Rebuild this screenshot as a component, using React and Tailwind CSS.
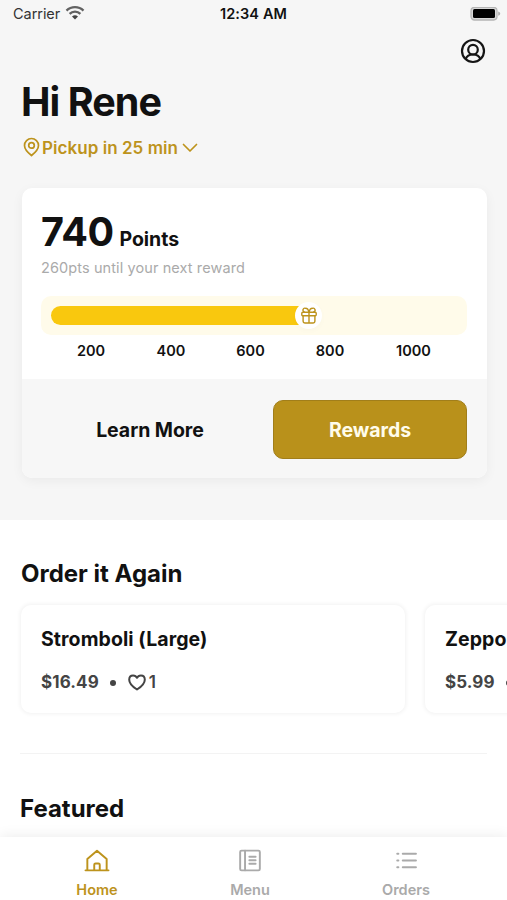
const marks = [
  { label: "200", width: "w-[80px]" },
  { label: "400", width: "w-[80px]" },
  { label: "600", width: "w-[79px]" },
  { label: "800", width: "w-[80px]" },
  { label: "1000", width: "w-[87px]" },
];

function WifiIcon() {
  return (
    <svg width="20" height="16" viewBox="0 0 20 16" fill="none" stroke="#626262" strokeWidth="2.3">
      <path d="M1.500 4.600a12.200 12.200 0 0 1 17 0" />
      <path d="M4.600 7.900a7.700 7.700 0 0 1 10.800 0" />
      <path d="M7 10.600a4.300 4.300 0 0 1 6 0L10 13.600z" fill="#444" stroke="none" />
    </svg>
  );
}

function BatteryIcon() {
  return (
    <svg width="31" height="15" viewBox="0 0 31 15" fill="none">
      <rect x="1" y=".4" width="26" height="12.600" rx="3.400" fill="#d8d8d8" stroke="#b5b5b5" strokeWidth="1.300" />
      <rect x="3" y="2.100" width="22" height="8.800" rx="1.500" fill="#000" />
      <path d="M28.200 4.600q2 .6 2 2.100t-2 2.100z" fill="#adadad" />
    </svg>
  );
}

function ProfileIcon() {
  return (
    <svg width="26" height="26" viewBox="0 0 26 26" fill="none" stroke="#151515" strokeWidth="2.2">
      <circle cx="13" cy="13" r="11" />
      <circle cx="13" cy="11.700" r="4.800" />
      <path d="M5.600 21.200c1-2.800 3.700-4.700 7.400-4.700s6.400 1.900 7.400 4.700" />
    </svg>
  );
}

function PinIcon() {
  return (
    <svg width="17" height="20" viewBox="0 0 17 20" fill="none" stroke="#bd931c" strokeWidth="1.700" strokeLinejoin="round">
      <path d="M8.500 18.500C6.400 16.800 1.500 12.800 1.500 8.400a7 6.900 0 0 1 14 0c0 4.400-4.900 8.400-7 10.100z" />
      <circle cx="8.500" cy="8.400" r="2.800" />
    </svg>
  );
}

function GiftIcon() {
  return (
    <svg width="16" height="17" viewBox="0 0 16 17" fill="none" stroke="#bd931c" strokeWidth="1.400" strokeLinejoin="round" strokeLinecap="round">
      <rect x=".8" y="5.300" width="14.400" height="3.400" rx="1" />
      <path d="M2.100 8.800v5.500a1.700 1.700 0 0 0 1.700 1.700h8.400a1.700 1.700 0 0 0 1.700-1.700V8.800M8 5.300V16M7.800 5.100C7.400 2.500 6 1.300 4.500 1.300a1.900 1.900 0 0 0-1.300 3.600M8.200 5.100C8.600 2.500 10 1.300 11.500 1.300a1.900 1.900 0 0 1 1.300 3.600" />
    </svg>
  );
}

function HeartIcon() {
  return (
    <svg width="18" height="17" viewBox="0 0 18 17" fill="none" stroke="#444" strokeWidth="2" strokeLinejoin="round">
      <path d="M9 15.500C6.500 13.900 1.200 10.200 1.200 5.700c0-2.600 1.700-4.300 3.900-4.300 1.600 0 3.200.9 3.900 2.400.7-1.500 2.300-2.400 3.900-2.400 2.200 0 3.900 1.700 3.900 4.300 0 4.500-5.300 8.200-7.800 9.800z" />
    </svg>
  );
}

function HomeIcon() {
  return (
    <svg width="28" height="25" viewBox="0 0 28 25" fill="none" stroke="#bd931c" strokeWidth="2.1" strokeLinecap="round" strokeLinejoin="round">
      <path d="M1.500 23.200h25M3.500 23.200V10.800L14 1.800l10.500 9v12.400M11 23.200v-6a1.500 1.500 0 0 1 1.500-1.500h3a1.500 1.500 0 0 1 1.500 1.500v6" />
    </svg>
  );
}

function MenuIcon() {
  return (
    <svg width="24" height="25" viewBox="0 0 24 25" fill="none" stroke="#aaa" strokeWidth="2.1" strokeLinecap="round">
      <rect x="1.300" y="1.800" width="21.400" height="21.400" rx="1.500" />
      <path d="M6.600 2v21M11.300 8.400h6.800M11.300 12.200h6.800M11.300 16h6.800" />
    </svg>
  );
}

function OrdersIcon() {
  return (
    <svg width="24" height="25" viewBox="0 0 24 25" fill="none" stroke="#aaa" strokeWidth="2.200" strokeLinecap="round">
      <path d="M8.500 5.200H22.800M8.500 12.500H22.800M8.500 19.800H22.800M2.500 5.200h1.200M2.500 12.500h1.200M2.500 19.800h1.200" />
    </svg>
  );
}

function ItemCard({ name, price, likes }) {
  return (
    <article className="h-[108px] w-[384px] shrink-0 rounded-[10px] bg-white pl-5 pt-[22px] shadow-[0_0_4px_1px_rgba(0,0,0,0.055)]">
      <h3 className="text-[19.5px] leading-6 font-bold tracking-[0.08px] whitespace-nowrap">{name}</h3>
      <div className="mt-[19px] flex h-6 items-center text-[17px] leading-6 font-bold text-[#444]">
        <span className="tracking-[0.1px]">{price}</span>
        <span className="ml-[11px] mt-0.5 size-[6px] rounded-full bg-[#444]" />
        <span className="ml-[12px]"><HeartIcon /></span>
        <span className="ml-[3px] font-semibold">{likes}</span>
      </div>
    </article>
  );
}

function Tab({ icon, label, tone }) {
  return (
    <div className={`flex w-[80px] flex-col items-center ${tone}`}>
      {icon}
      <span className="mt-[8px] text-[14.5px] leading-5 font-semibold">{label}</span>
    </div>
  );
}

export default function App() {
  return (
    <div className="flex h-[900px] w-[507px] flex-col overflow-hidden bg-white font-['Inter',sans-serif] text-[#111]">
      <header className="h-[520px] shrink-0 bg-[#f6f6f6]">
        <div className="grid h-7 grid-cols-3 items-center pl-[13px] pr-[6px]">
          <div className="flex items-center gap-[5px] text-[14.5px] leading-5 text-[#333]">
            <span className="tracking-[-0.05px]">Carrier</span>
            <WifiIcon />
          </div>
          <span className="-ml-[7px] text-center text-[14.5px] leading-5 font-semibold tracking-[0.1px] whitespace-nowrap">12:34 AM</span>
          <div className="flex justify-end"><BatteryIcon /></div>
        </div>
        <div className="mt-[10px] flex justify-end pr-[21px]"><ProfileIcon /></div>
        <h1 className="mt-[14px] pl-[21px] text-[39.500px] leading-[48px] font-bold tracking-[-0.950px]">Hi Rene</h1>
        <div className="mt-[9px] flex h-6 items-center pl-[23px] text-[17px] leading-6 font-semibold text-[#bd931c]">
          <PinIcon />
          <span className="ml-[2px] pt-px tracking-[0.050px]">Pickup in 25 min</span>
          <svg className="ml-[4px] mt-0.5" width="16" height="10" viewBox="0 0 16 10" fill="none" stroke="#bd931c" strokeWidth="1.700" strokeLinecap="round" strokeLinejoin="round">
            <path d="m1.500 1.500 6.500 6.500 6.500-6.500" />
          </svg>
        </div>
        <section className="mt-[29px] ml-[22px] h-[290px] w-[465px] rounded-[10px] bg-white shadow-[0_3px_12px_rgba(0,0,0,0.05)]">
          <div className="h-[191px] px-[19px] pt-5">
            <div className="flex items-baseline">
              <span className="text-[39.500px] leading-[48px] font-bold tracking-[-0.500px]">740</span>
              <span className="ml-[6px] text-[19.500px] leading-6 font-bold tracking-[-0.050px]">Points</span>
            </div>
            <p className="mt-[2px] text-[14.500px] leading-5 tracking-[0.100px] text-[#aaa]">260pts until your next reward</p>
            <div className="mt-[18px] flex h-[39px] w-[426px] items-center rounded-[10px] bg-[#fffbea] pl-[10px]">
              <div className="h-[19px] w-[256px] rounded-l-full bg-[#f9c80e]" />
              <div className="-ml-3 flex size-[27px] items-center justify-center rounded-full bg-white shadow-[0_2px_6px_rgba(0,0,0,0.02)]">
                <GiftIcon />
              </div>
            </div>
            <div className="mt-[6px] flex pl-[10px] text-center text-[14.500px] leading-5 font-semibold">
              {marks.map((mark) => <span key={mark.label} className={mark.width}>{mark.label}</span>)}
            </div>
          </div>
          <div className="flex h-[99px] items-center justify-between rounded-b-[10px] bg-[#f7f7f7] pr-[20px] pl-[31px] pt-px text-[19.500px] font-bold tracking-[-0.050px]">
            <button className="h-[59px] w-[194px] pt-[3px]">Learn More</button>
            <button className="h-[59px] w-[194px] rounded-[10px] border border-[#a17e1a] bg-[#b9911b] pt-[3px] text-[#fffceb]">Rewards</button>
          </div>
        </section>
      </header>

      <main className="h-[317px] shrink-0">
        <h2 className="pt-[39px] pl-[21px] text-2xl leading-[30px] font-bold">Order it Again</h2>
        <div className="mt-[16px] flex gap-[20px] pl-[21px]">
          <ItemCard name="Stromboli (Large)" price="$16.49" likes="1" />
          <ItemCard name="Zeppoli" price="$5.99" likes="1" />
        </div>
        <hr className="mx-5 mt-[40px] border-[#f3f3f3]" />
        <h2 className="mt-[40px] pl-[20px] text-2xl leading-[30px] font-bold">Featured</h2>
      </main>

      <nav className="flex h-[63px] shrink-0 bg-white pt-[12px] pl-[57px] shadow-[0_-2px_12px_rgba(0,0,0,0.065)]">
        <Tab icon={<HomeIcon />} label="Home" tone="text-[#bd931c]" />
        <div className="w-[73px]" />
        <Tab icon={<MenuIcon />} label="Menu" tone="text-[#aaa]" />
        <div className="w-[76px]" />
        <Tab icon={<OrdersIcon />} label="Orders" tone="text-[#aaa]" />
      </nav>
    </div>
  );
}
